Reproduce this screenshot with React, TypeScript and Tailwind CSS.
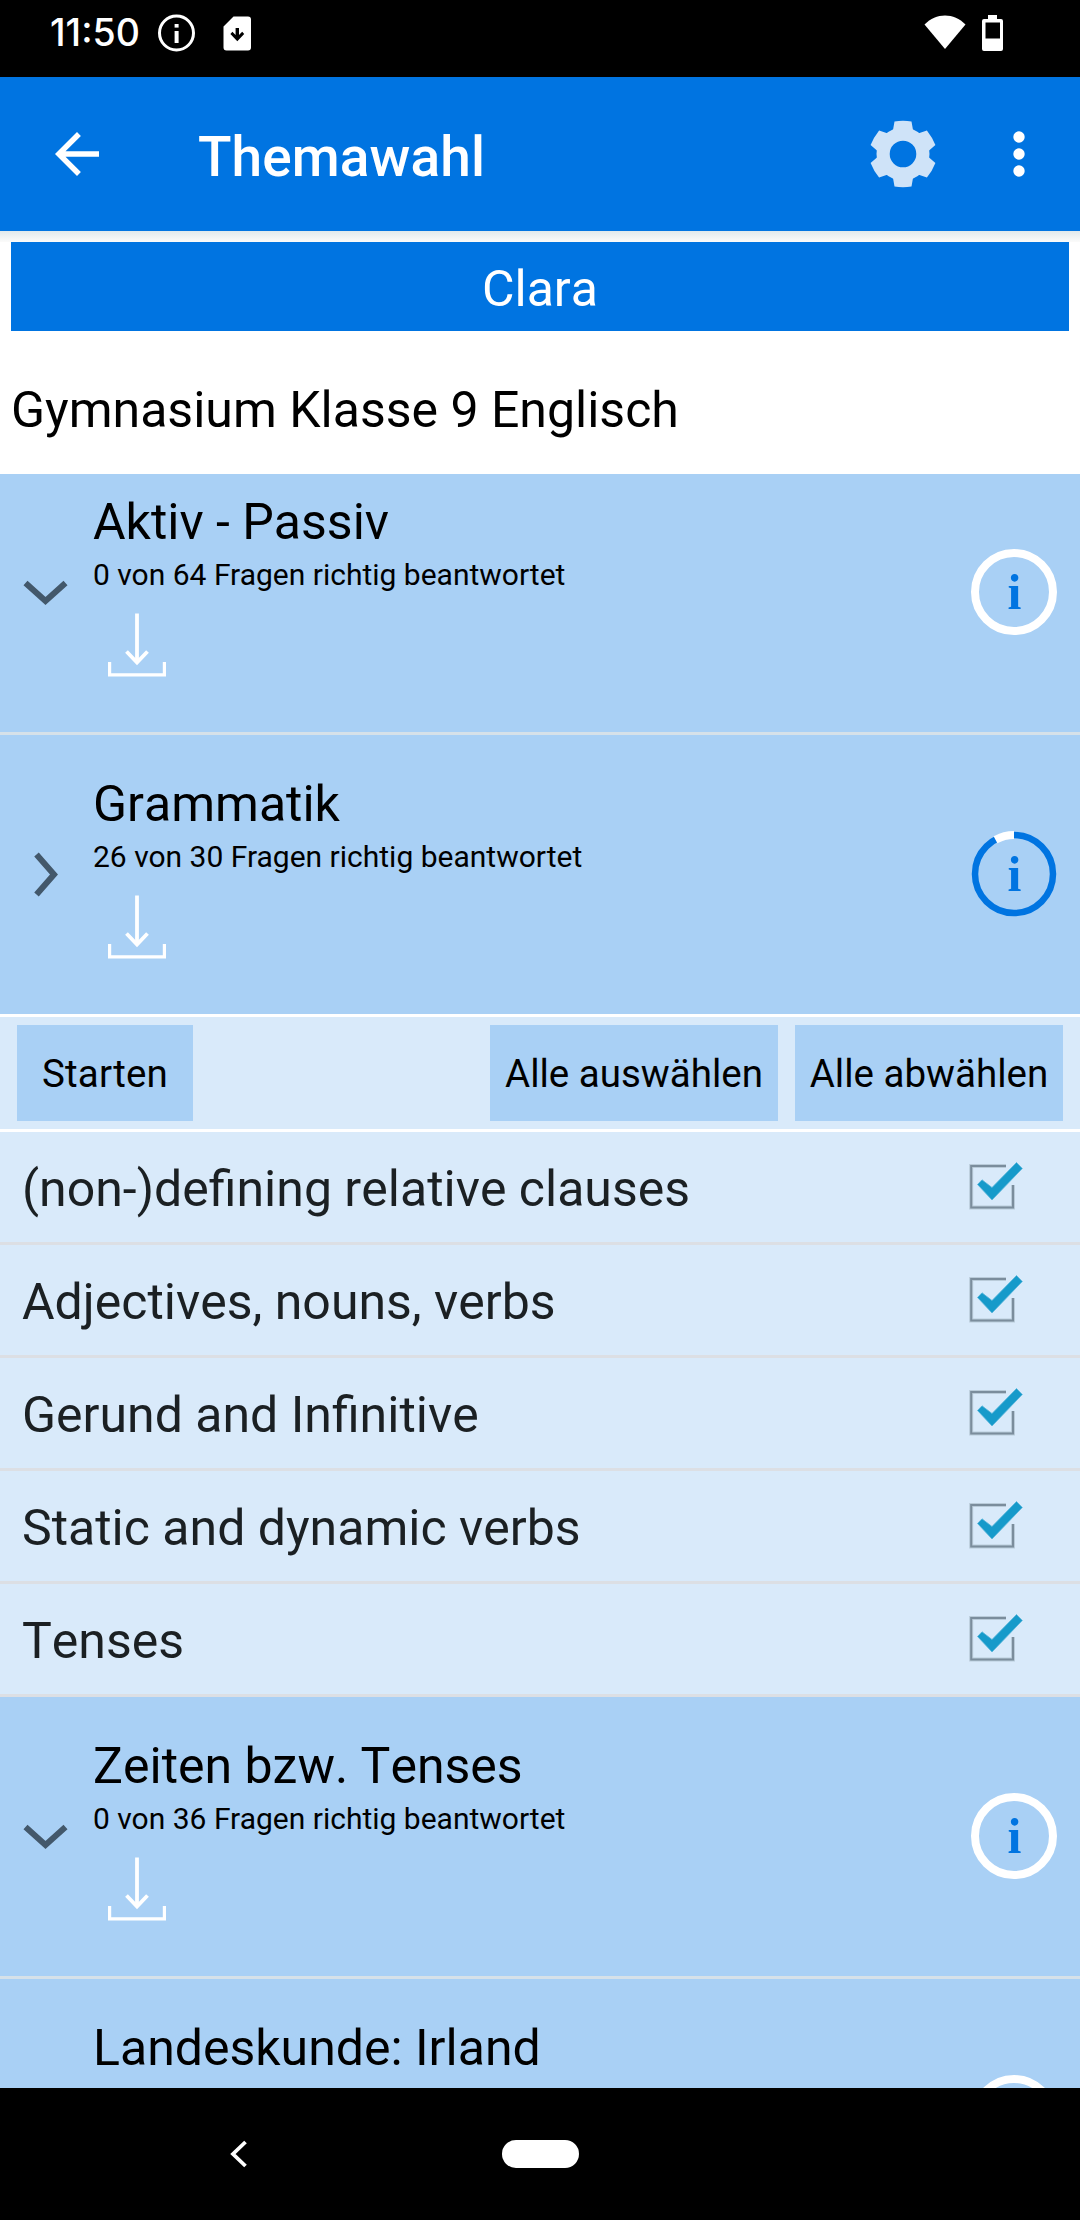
const GEAR_ANGLES = [0, 60, 120, 180, 240, 300];

function StatusBar() {
  return (
    <div className="flex h-[77px] shrink-0 items-start bg-black text-white">
      <span className="ml-[50px] mt-[9px] w-[90px] whitespace-nowrap font-['Inter'] text-[37.500px] font-medium leading-[48px]">
        11:50
      </span>
      <svg className="ml-[17px] mt-[14px]" width="39" height="39" viewBox="0 0 39 39" fill="none">
        <circle cx="19.5" cy="19" r="17" stroke="white" strokeWidth="3" />
        <rect x="17.6" y="10" width="4" height="3.6" fill="white" />
        <rect x="17.6" y="17" width="4" height="12" fill="white" />
      </svg>
      <svg className="ml-[27px] mt-[16px]" width="29" height="35" viewBox="0 0 29 35">
        <path d="M10.5 0.5H25a3 3 0 0 1 3 3V31.500a3 3 0 0 1-3 3H3.500a3 3 0 0 1-3-3V10.500Z" fill="white" />
        <path d="M12.600 12h3.400v7l3.200-3.200 2 2.300-6.900 7.200-6.900-7.200 2-2.300 3.200 3.200Z" fill="black" />
      </svg>
      <div className="flex-1" />
      <svg className="mt-[15px]" width="42" height="35" viewBox="0 0 42 35">
        <path d="M21 34 0.500 9.500C6.500 3.500 13.500 0.500 21 0.500S35.500 3.500 41.500 9.500Z" fill="white" />
      </svg>
      <svg className="ml-[16px] mr-[77px] mt-[15px]" width="21" height="36" viewBox="0 0 21 36">
        <path
          d="M6 0h9v4h4a2 2 0 0 1 2 2v28a2 2 0 0 1-2 2H2a2 2 0 0 1-2-2V6a2 2 0 0 1 2-2h4ZM3.500 7.500v16h14.500v-16Z"
          fill="white"
          fillRule="evenodd"
        />
      </svg>
    </div>
  );
}

function GearIcon() {
  return (
    <svg width="68" height="68" viewBox="-34 -34 68 68">
      <g fill="#cfe3f8">
        <path
          fillRule="evenodd"
          d="M0-26.500A26.500 26.500 0 0 1 0 26.500A26.500 26.500 0 0 1 0-26.500ZM0-13.300A13.300 13.300 0 0 0 0 13.300A13.300 13.300 0 0 0 0-13.300Z"
        />
        {GEAR_ANGLES.map((a) => (
          <path key={a} d="M-8.500-32.500Q0-33.800 8.500-32.500L10-24L13-21H-13L-10-24Z" transform={`rotate(${a})`} />
        ))}
      </g>
    </svg>
  );
}

function AppBar() {
  return (
    <header className="flex h-[154px] shrink-0 items-center bg-[#0074e1] text-white">
      <svg className="ml-[44px]" width="66" height="66" viewBox="0 0 24 24" fill="white">
        <path d="M20 11H7.830l5.590-5.590L12 4l-8 8 8 8 1.410-1.410L7.830 13H20v-2z" />
      </svg>
      <h1 className="ml-[88px] mt-[5px] flex-1 text-[55px] font-medium leading-[64px] tracking-[0.1px]">Themawahl</h1>
      <GearIcon />
      <svg className="ml-[76px] mr-[55px]" width="12" height="46" viewBox="0 0 12 46" fill="white">
        <circle cx="6" cy="6" r="5.700" />
        <circle cx="6" cy="23" r="5.700" />
        <circle cx="6" cy="40" r="5.700" />
      </svg>
    </header>
  );
}

function Chevron({ open }: { open: boolean }) {
  return (
    <svg className="ml-[22px] shrink-0" width="48" height="48" viewBox="-24 -24 48 48" fill="none">
      <path
        d={open ? "M-9.500-20.500L8-0.500L-9.500 19.500" : "M-20.500-10L-0.500 8L19.500-10"}
        stroke="#43586b"
        strokeWidth="6"
      />
    </svg>
  );
}

function DownloadIcon() {
  return (
    <svg className="ml-[15px] mt-[20px]" width="58" height="64" viewBox="0 0 58 64" fill="none" stroke="white">
      <path d="M29 0.500V49" strokeWidth="3.800" />
      <path d="M18.500 38.500L29 49.500L39.500 38.500" strokeWidth="3.800" />
      <path d="M1.600 49V61.800H56.400V49" strokeWidth="3.200" />
    </svg>
  );
}

function InfoRing({ open, showGlyph }: { open: boolean; showGlyph: boolean }) {
  return (
    <svg className="mb-[2px] mr-[22px] shrink-0" width="88" height="88" viewBox="-44 -44 88 88" fill="none">
      {open ? (
        <>
          <circle r="39" stroke="#0074e1" strokeWidth="6.500" />
          <path d="M-18.500-34.300A39 39 0 0 1 0-39" stroke="white" strokeWidth="8" />
        </>
      ) : (
        <circle r="39" stroke="white" strokeWidth="8" />
      )}
      {showGlyph && (
        <text
          x="0.500"
          y="16.500"
          textAnchor="middle"
          className="fill-[#0074e1] font-['Liberation_Serif'] text-[50px] font-bold"
        >
          i
        </text>
      )}
    </svg>
  );
}

function Topic({ title, progress, open = false }: { title: string; progress?: string; open?: boolean }) {
  return (
    <div className="flex h-[279px] shrink-0 items-center bg-[#a9d0f5]">
      <Chevron open={open} />
      <div className="ml-[23px] flex-1 self-start pt-[40px] text-black">
        <div className="text-[50px] leading-[58px] [font-kerning:none]">{title}</div>
        {progress && (
          <>
            <div className="mt-[6px] text-[30px] leading-[36px]">{progress}</div>
            <DownloadIcon />
          </>
        )}
      </div>
      <InfoRing open={open} showGlyph={progress !== undefined} />
    </div>
  );
}

function CheckRow({ label }: { label: string }) {
  return (
    <div className="flex h-[113px] shrink-0 items-center border-b-[3px] border-[#dcdfe4] bg-[#d9eafa]">
      <span className="mt-[3px] flex-1 pl-[22px] text-[50px] leading-[58px] text-[#1b2023] [font-kerning:none]">
        {label}
      </span>
      <svg className="mr-[54px]" width="58" height="58" viewBox="0 0 58 58" fill="none">
        <path d="M38 8H3.200V49.500H45V27" stroke="#b9cbd9" strokeWidth="4" />
        <path d="M38 8H3.200V49.500H45V27" stroke="#7b8d9c" strokeWidth="2" />
        <path
          d="M9.500 26.500L14 21.800L24 29.500L48.500 4.500L54.300 10.500L24 42Z"
          fill="#169aca"
          stroke="#5bb6da"
          strokeWidth="0.800"
        />
      </svg>
    </div>
  );
}

const SUBTOPICS = [
  "(non-)defining relative clauses",
  "Adjectives, nouns, verbs",
  "Gerund and Infinitive",
  "Static and dynamic verbs",
  "Tenses",
];

export default function App() {
  return (
    <div className="flex h-[2220px] w-[1080px] flex-col overflow-hidden bg-white font-['Roboto',sans-serif]">
      <StatusBar />
      <AppBar />
      <div className="h-[11px] shrink-0 bg-linear-to-b from-[#e0e9ec] to-[#fbfbfa]" />
      <div className="mx-[11px] flex h-[89px] shrink-0 items-center justify-center bg-[#0074e1] pt-[5px] text-[50px] leading-[58px] text-white [font-kerning:none]">
        Clara
      </div>
      <div className="flex h-[143px] shrink-0 items-center pl-[11px] pt-[14px] text-[50px] leading-[58px] text-black [font-kerning:none]">
        Gymnasium Klasse 9 Englisch
      </div>
      <main className="flex h-[1614px] shrink-0 flex-col overflow-hidden">
        <div className="flex h-[258px] shrink-0 flex-col justify-end overflow-hidden">
          <Topic title="Aktiv - Passiv" progress="0 von 64 Fragen richtig beantwortet" />
        </div>
        <div className="h-[3px] shrink-0 bg-[#d6e1e9]" />
        <Topic title="Grammatik" progress="26 von 30 Fragen richtig beantwortet" open />
        <div className="flex h-[118px] shrink-0 items-center border-y-[3px] border-white bg-[#d9eafa] text-[38.500px] leading-[46px] text-black">
          <button className="ml-[17px] h-[96px] w-[176px] bg-[#a9d0f5] pt-[2px] tracking-[0.2px]">Starten</button>
          <div className="flex-1" />
          <button className="h-[96px] w-[288px] whitespace-nowrap bg-[#a9d0f5] pt-[2px]">Alle auswählen</button>
          <button className="ml-[17px] mr-[17px] h-[96px] w-[268px] whitespace-nowrap bg-[#a9d0f5] pt-[2px]">
            Alle abwählen
          </button>
        </div>
        {SUBTOPICS.map((label) => (
          <CheckRow key={label} label={label} />
        ))}
        <Topic title="Zeiten bzw. Tenses" progress="0 von 36 Fragen richtig beantwortet" />
        <div className="h-[3px] shrink-0 bg-[#d6e1e9]" />
        <Topic title="Landeskunde: Irland" />
      </main>
      <nav className="flex h-[132px] shrink-0 items-center bg-black">
        <svg className="ml-[229px]" width="20" height="28" viewBox="0 0 20 28" fill="none">
          <path d="M16.500 2L4 14L16.500 26" stroke="white" strokeWidth="3.800" />
        </svg>
        <div className="ml-[253px] h-[28px] w-[77px] rounded-full bg-white" />
      </nav>
    </div>
  );
}
